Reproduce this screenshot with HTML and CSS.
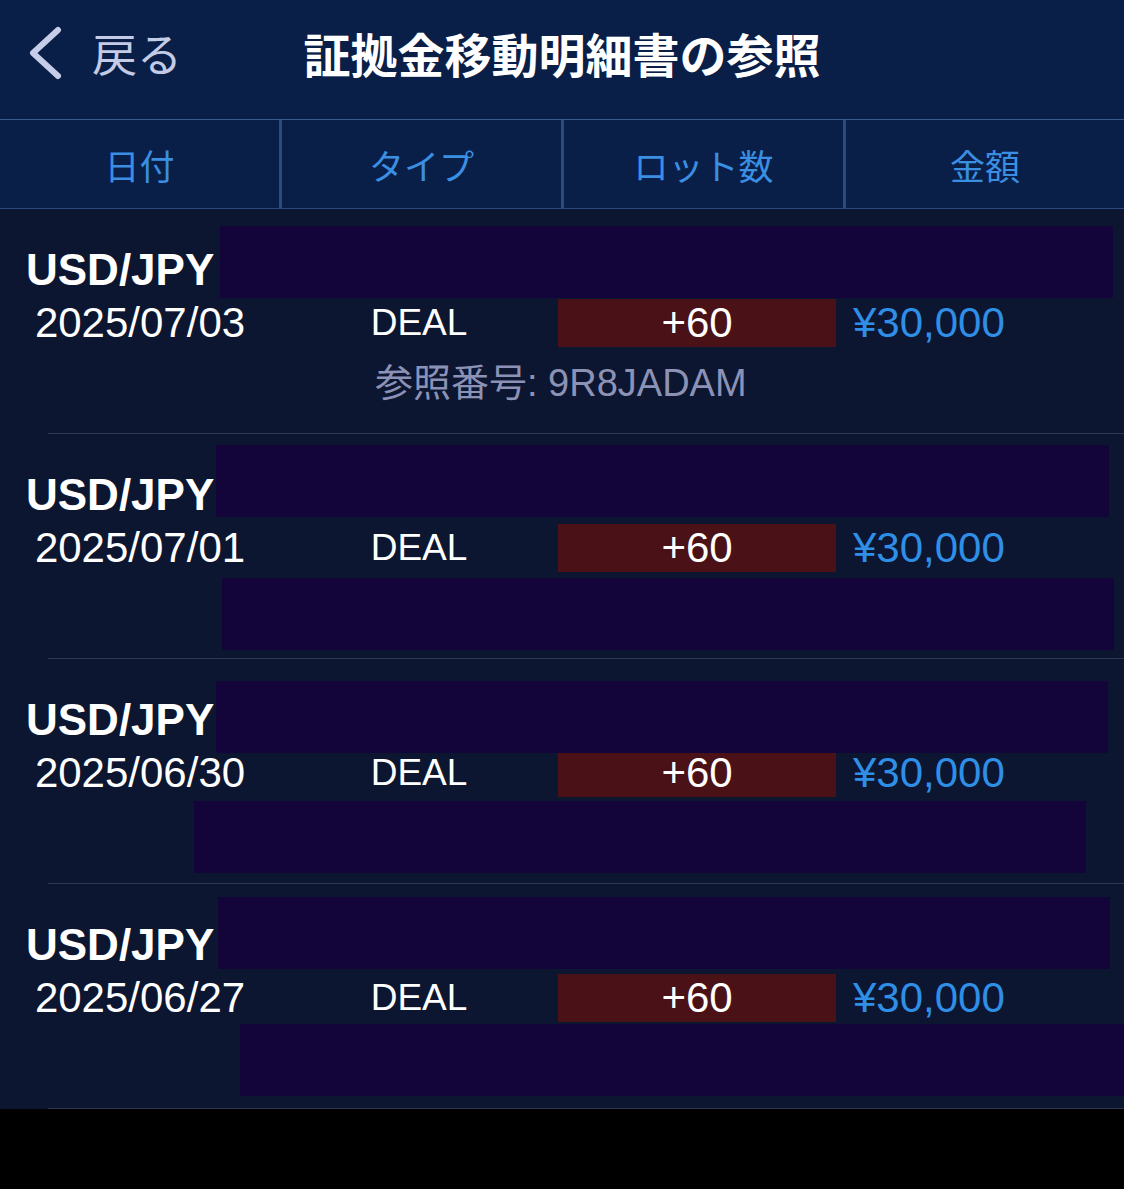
FILE: index.html
```html
<!DOCTYPE html>
<html lang="ja">
<head>
  <meta charset="UTF-8">
  <title>証拠金移動明細書の参照</title>
  <link rel="stylesheet" href="styles.css">
</head>
<body>

  <div class="app">
    <div class="topbar">
      <div class="back">
        <svg class="chevron" width="36" height="54" viewBox="0 0 36 54">
          <path d="M31 4 L6 27 L31 50" fill="none" stroke="#c5cde8" stroke-width="6" stroke-linecap="round" stroke-linejoin="round"/>
        </svg>
        <span class="back-text">戻る</span>
      </div>
      <div class="title">証拠金移動明細書の参照</div>
      <div></div>
    </div>

    <div class="columns">
      <div class="col">日付</div>
      <div class="col">タイプ</div>
      <div class="col">ロット数</div>
      <div class="col">金額</div>
    </div>

    <div class="list">
      <div class="row">
        <div class="pair">USD/JPY</div>
        <div class="cells">
          <div class="date">2025/07/03</div>
          <div class="type">DEAL</div>
          <div class="lot">+60</div>
          <div class="amount">¥30,000</div>
        </div>
        <div class="ref">参照番号: 9R8JADAM</div>
        <div class="mask mask-1a"></div>
      </div>
      <div class="sep"></div>

      <div class="row">
        <div class="pair">USD/JPY</div>
        <div class="cells">
          <div class="date">2025/07/01</div>
          <div class="type">DEAL</div>
          <div class="lot">+60</div>
          <div class="amount">¥30,000</div>
        </div>
        <div class="mask mask-2a"></div>
        <div class="mask mask-2b"></div>
      </div>
      <div class="sep"></div>

      <div class="row">
        <div class="pair">USD/JPY</div>
        <div class="cells">
          <div class="date">2025/06/30</div>
          <div class="type">DEAL</div>
          <div class="lot">+60</div>
          <div class="amount">¥30,000</div>
        </div>
        <div class="mask mask-3a"></div>
        <div class="mask mask-3b"></div>
      </div>
      <div class="sep"></div>

      <div class="row">
        <div class="pair">USD/JPY</div>
        <div class="cells">
          <div class="date">2025/06/27</div>
          <div class="type">DEAL</div>
          <div class="lot">+60</div>
          <div class="amount">¥30,000</div>
        </div>
        <div class="mask mask-4a"></div>
        <div class="mask mask-4b"></div>
      </div>
      <div class="sep"></div>
    </div>
  </div>

</body>
</html>
```

FILE: styles.css
```css
body {
  margin: 0;
  background-color: #000;
  font-family: "Liberation Sans", "Noto Sans CJK JP", sans-serif;
  color: #fff;
}

.app {
  width: 1124px;
  background-color: #0c1631;
}

/* Top bar */
.topbar {
  display: grid;
  grid-template-columns: 1fr auto 1fr;
  align-items: center;
  height: 119px;
  background-color: #0a1f48;
  border-bottom: 1px solid #3a5a90;
}

.back {
  display: flex;
  align-items: center;
  padding-left: 27px;
  padding-bottom: 14px;
}

.chevron {
  display: block;
}

.back-text {
  margin-left: 29px;
  font-family: "Noto Sans CJK JP", sans-serif;
  font-size: 45px;
  color: #c3cbe6;
}

.title {
  font-family: "Noto Sans CJK JP", sans-serif;
  font-size: 47px;
  font-weight: bold;
  padding-bottom: 14px;
}

/* Column headers */
.columns {
  display: grid;
  grid-template-columns: 282px 282px 282px 1fr;
  height: 88px;
  background-color: #0a1f48;
  border-bottom: 1px solid #2a4a80;
}

.col {
  display: flex;
  align-items: center;
  justify-content: center;
  font-family: "Noto Sans CJK JP", sans-serif;
  font-size: 35px;
  color: #3b8fe3;
  border-right: 3px solid #2c4a7e;
}

.col:last-child {
  border-right: none;
}

/* Rows */
.row {
  position: relative;
  height: 224px;
}

.sep {
  height: 1px;
  margin-left: 48px;
  background-color: #2e3852;
}

.pair {
  padding-top: 39px;
  padding-left: 26px;
  font-size: 44px;
  font-weight: bold;
  line-height: 44px;
}

.cells {
  display: grid;
  grid-template-columns: 280px 278px 278px 1fr;
  margin-top: 7px;
  height: 48px;
  line-height: 48px;
}

.date {
  text-align: center;
  font-size: 42px;
}

.type {
  text-align: center;
  font-size: 37px;
}

.lot {
  text-align: center;
  font-size: 42px;
  background-color: #4a1216;
}

.amount {
  padding-left: 17px;
  font-size: 42px;
  color: #2f8fe6;
}

.ref {
  margin-top: 12px;
  padding-left: 375px;
  font-size: 38px;
  line-height: 48px;
  color: #8c92b6;
}

/* Redaction blocks laid over the rows */
.mask {
  position: absolute;
  height: 72px;
  background-color: #13053a;
}

.mask-1a { top: 17px; left: 220px; width: 893px; }
.mask-2a { top: 11px; left: 216px; width: 893px; }
.mask-2b { top: 144px; left: 222px; width: 892px; }
.mask-3a { top: 22px; left: 216px; width: 892px; }
.mask-3b { top: 142px; left: 194px; width: 892px; }
.mask-4a { top: 13px; left: 218px; width: 892px; }
.mask-4b { top: 140px; left: 240px; width: 884px; }
```
